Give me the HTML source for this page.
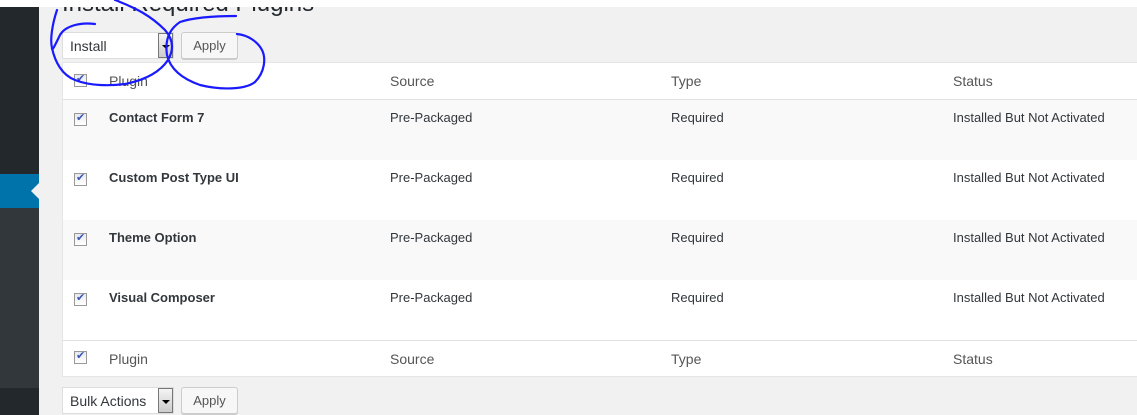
<!DOCTYPE html>
<html><head><style>
*{margin:0;padding:0;box-sizing:border-box}
body{width:1137px;height:415px;overflow:hidden;background:#f1f1f1;font-family:"Liberation Sans",sans-serif;color:#444;position:relative}
.topw{position:absolute;left:0;top:0;width:1137px;height:7px;background:#fff;z-index:5}
.sb{position:absolute;left:0;top:7px;width:39px;height:408px;background:#23282d}
.sb2{position:absolute;left:0;top:208px;width:39px;height:180px;background:#32373c}
.blue{position:absolute;left:0;top:174px;width:39px;height:34px;background:#0073aa}
.tri{position:absolute;left:31px;top:183px;width:0;height:0;border-top:8px solid transparent;border-bottom:8px solid transparent;border-right:8px solid #f1f1f1}
.title{position:absolute;left:62px;top:-10px;font-size:24px;color:#23282d;white-space:nowrap}
.sel{position:absolute;left:62px;width:112px;height:27px;background:#fff;border:1px solid #ddd;font-size:14px;color:#32373c;padding:5px 7px}
.arr{position:absolute;right:0;top:0;width:15px;height:25px;background:linear-gradient(#f4f4f4,#ccc);border:1px solid #777}
.arr:after{content:"";position:absolute;left:3px;top:11px;border-left:4px solid transparent;border-right:4px solid transparent;border-top:4px solid #000}
.btn{position:absolute;left:181px;width:57px;height:27px;background:#f7f7f7;border:1px solid #ccc;border-radius:3px;font-size:13px;color:#555;text-align:center;line-height:25px;box-shadow:0 1px 0 #ccc}
.tbl{position:absolute;left:62px;top:62px;width:1075px;height:315px;background:#fff;border:1px solid #e5e5e5;border-right:none}
.row{position:absolute;left:0;width:1075px;font-size:13px;color:#32373c}
.row span{position:absolute}
.cb{position:absolute;left:11px;width:13px;height:13px;border:1px solid #999;background:linear-gradient(#e8e8f0,#fff)}
.cb:after{content:"✔";position:absolute;left:1px;top:-3px;font-size:11px;color:#3a56b0}
.h{font-size:14px;color:#555}
</style></head><body>
<div class="topw"></div>
<div class="sb"></div><div class="sb2"></div><div class="blue"></div><div class="tri"></div>
<div class="title">Install Required Plugins</div>
<div class="sel" style="top:32px">Install<div class="arr"></div></div>
<div class="btn" style="top:32px">Apply</div>
<div class="tbl">
 <div class="row h" style="top:0;height:37px;border-bottom:1px solid #e1e1e1"><div class="cb" style="top:11px"></div><span style="left:46px;top:10px">Plugin</span><span style="left:327px;top:10px">Source</span><span style="left:608px;top:10px">Type</span><span style="left:890px;top:10px">Status</span></div>
 <div class="row" style="top:37px;height:60px;background:#f9f9f9"><div class="cb" style="top:13px"></div><span style="left:46px;top:10px;font-weight:bold">Contact Form 7</span><span style="left:327px;top:10px">Pre-Packaged</span><span style="left:608px;top:10px">Required</span><span style="left:890px;top:10px">Installed But Not Activated</span></div>
 <div class="row" style="top:97px;height:60px"><div class="cb" style="top:13px"></div><span style="left:46px;top:10px;font-weight:bold">Custom Post Type UI</span><span style="left:327px;top:10px">Pre-Packaged</span><span style="left:608px;top:10px">Required</span><span style="left:890px;top:10px">Installed But Not Activated</span></div>
 <div class="row" style="top:157px;height:60px;background:#f9f9f9"><div class="cb" style="top:13px"></div><span style="left:46px;top:10px;font-weight:bold">Theme Option</span><span style="left:327px;top:10px">Pre-Packaged</span><span style="left:608px;top:10px">Required</span><span style="left:890px;top:10px">Installed But Not Activated</span></div>
 <div class="row" style="top:217px;height:60px"><div class="cb" style="top:13px"></div><span style="left:46px;top:10px;font-weight:bold">Visual Composer</span><span style="left:327px;top:10px">Pre-Packaged</span><span style="left:608px;top:10px">Required</span><span style="left:890px;top:10px">Installed But Not Activated</span></div>
 <div class="row h" style="top:277px;height:37px;border-top:1px solid #e1e1e1"><div class="cb" style="top:10px"></div><span style="left:46px;top:10px">Plugin</span><span style="left:327px;top:10px">Source</span><span style="left:608px;top:10px">Type</span><span style="left:890px;top:10px">Status</span></div>
</div>
<div class="sel" style="top:387px">Bulk Actions<div class="arr"></div></div>
<div class="btn" style="top:387px">Apply</div>
<svg style="position:absolute;left:0;top:0;z-index:6" width="1137" height="415" fill="none" stroke="#1a1aff" stroke-width="2.2" stroke-linecap="round">
<path d="M95 24 C80 22 65 26 60 35 C55 45 52 52 52 48"/>
<path d="M57 10 C52 25 50 40 52 48 C55 62 62 75 75 80 C90 86 110 86 125 84 C145 80 160 72 168 60 C175 48 172 38 165 30 C150 15 135 8 120 2 C118 1 116 0 115 0"/>
<path d="M236 16 C215 16 195 17 180 22 C168 30 165 42 167 55 C170 68 180 78 200 85 C220 90 245 90 255 82 C265 72 266 58 262 50 C258 42 248 35 237 34"/>
</svg>
</body></html>
